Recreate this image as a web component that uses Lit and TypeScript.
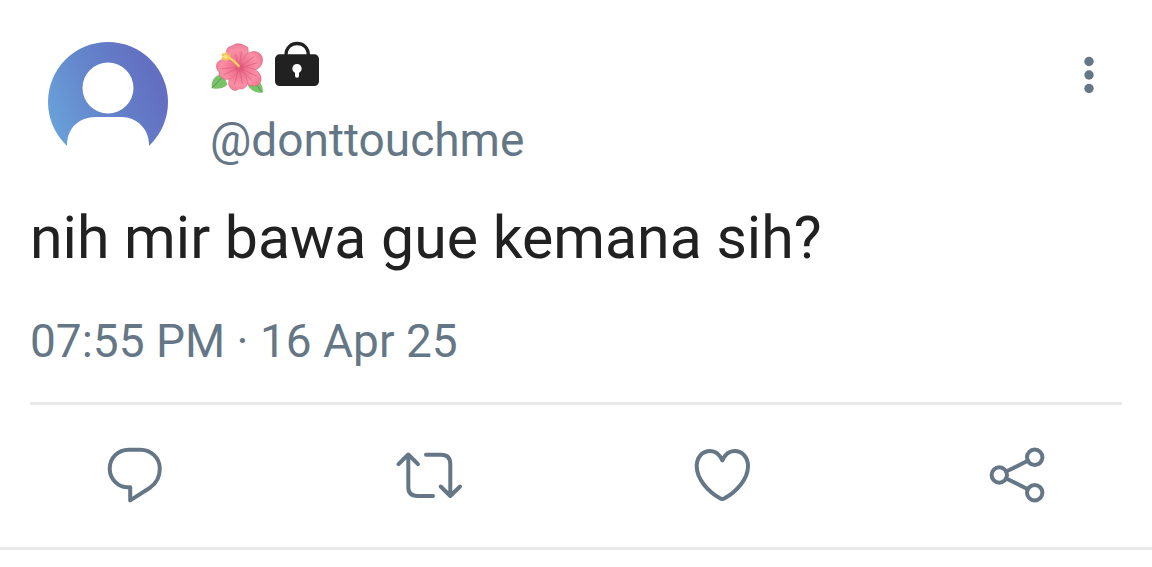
import { LitElement, html, css } from "lit";
import { customElement } from "lit/decorators.js";

@customElement("app-root")
export class AppRoot extends LitElement {
  static styles = css`
    :host {
      display: block;
      font-family: Roboto, "Noto Sans", sans-serif;
      color: #212121;
      background: #fff;
    }
    .post {
      box-sizing: border-box;
      padding: 42px 30px 0;
      border-bottom: 3px solid #e9e9e9;
    }
    .head {
      display: flex;
      align-items: flex-start;
      padding-left: 18px;
      gap: 42px;
    }
    svg {
      display: block;
      flex: none;
      overflow: visible;
    }
    .avatar {
      width: 120px;
      height: 120px;
    }
    .who {
      flex: 1;
    }
    .name {
      display: flex;
      gap: 6px;
      height: 54px;
    }
    .emoji {
      width: 54px;
      height: 54px;
    }
    .handle {
      display: block;
      margin-top: 16px;
      font-size: 46px;
      line-height: 56px;
      color: #657786;
      text-decoration: none;
    }
    button {
      padding: 0;
      border: 0;
      background: none;
      color: #657786;
      cursor: pointer;
    }
    .more {
      margin-top: 6px;
      margin-right: 9px;
    }
    .more svg {
      width: 48px;
      height: 54px;
    }
    .body {
      margin: 34px 0 0;
      font-size: 59px;
      line-height: 72px;
    }
    .time {
      display: block;
      margin-top: 39px;
      font-size: 46px;
      line-height: 56px;
      color: #657786;
    }
    .actions {
      display: flex;
      justify-content: space-between;
      margin-top: 33px;
      padding: 34px 68px 36px;
      border-top: 3px solid #e9e9e9;
    }
    .actions svg {
      width: 72px;
      height: 72px;
      fill: none;
      stroke: currentColor;
      stroke-width: 4;
      stroke-linecap: round;
      stroke-linejoin: round;
    }
  `;

  render() {
    return html`
      <article class="post">
        <header class="head">
          <svg class="avatar" viewBox="0 0 120 120" role="img" aria-label="Profile picture">
            <defs>
              <linearGradient id="sky" x1="0" y1="0.7" x2="0.9" y2="0.3">
                <stop offset="0" stop-color="#69a3da" />
                <stop offset="0.5" stop-color="#6484cb" />
                <stop offset="1" stop-color="#636fc1" />
              </linearGradient>
            </defs>
            <circle cx="60" cy="60" r="60" fill="url(#sky)" />
            <circle cx="60" cy="46" r="25.5" fill="#fff" />
            <path d="M19 121V103C19 86 31 75 48 75H73C90 75 101 88 101 103V121Z" fill="#fff" />
          </svg>
          <div class="who">
            <div class="name">
              <svg class="emoji" viewBox="30 21 162 162" role="img" aria-label="Hibiscus">
                <defs>
                  <radialGradient id="petal" gradientUnits="userSpaceOnUse" cx="118" cy="98" r="76">
                    <stop offset="0" stop-color="#dc4570" />
                    <stop offset="0.25" stop-color="#f0728f" />
                    <stop offset="0.7" stop-color="#f98fa6" />
                    <stop offset="1" stop-color="#ef7893" />
                  </radialGradient>
                </defs>
                <path d="M64 119C49 119 33 131 35 160C51 163 69 161 82 149C79 139 76 128 64 119Z" fill="#79c267" />
                <path d="M37 158C48 148 57 137 66 127" fill="none" stroke="#4a9c52" stroke-width="3" />
                <path d="M143 150C153 169 171 175 188 173C190 151 180 136 163 132Z" fill="#79c267" />
                <path d="M158 141C169 149 178 160 186 171" fill="none" stroke="#4a9c52" stroke-width="3" />
                <g fill="url(#petal)" stroke="#df6380" stroke-width="2" stroke-linejoin="round">
                  <path d="M118 98C91 88 77 65 80 46C84 32 96 36 101 30C114 21 132 31 142 36C150 52 140 78 118 98Z" />
                  <path d="M118 98C127 72 136 56 153 51C168 47 182 54 186 66C191 80 183 97 170 103C151 111 132 104 118 98Z" />
                  <path d="M118 98C149 95 176 102 182 124C187 145 172 156 158 152C139 154 122 130 118 98Z" />
                  <path d="M118 98C135 118 149 138 139 153C132 166 119 158 113 164C101 172 84 156 86 143C87 123 103 112 118 98Z" />
                  <path d="M118 98C111 125 86 139 70 131C59 126 56 117 57 110C46 101 47 83 59 77C75 67 100 80 118 98Z" />
                </g>
                <g fill="none" stroke="#db5a7c" stroke-width="2" stroke-linecap="round">
                  <path d="M118 96L124 50M118 96L106 59" />
                  <path d="M120 97L161 65M122 98L170 84" />
                  <path d="M121 100L169 123M121 101L156 137" />
                  <path d="M119 101L127 145M117 101L103 147" />
                  <path d="M114 99L72 119M113 97L66 101" />
                </g>
                <path d="M80 66C91 69 100 76 116 93" fill="none" stroke="#f4b54f" stroke-width="8" stroke-linecap="round" />
                <path d="M80 65C91 68 100 75 114 90" fill="none" stroke="#ffdc78" stroke-width="4" stroke-linecap="round" />
                <g fill="#fac24f">
                  <circle cx="70" cy="60" r="5" /><circle cx="78" cy="57" r="5" />
                  <circle cx="86" cy="62" r="5" /><circle cx="70" cy="70" r="5" />
                  <circle cx="78" cy="73" r="5" /><circle cx="77" cy="65" r="6" fill="#ffe183" />
                </g>
              </svg>
              <svg class="emoji" viewBox="210 21 162 162" role="img" aria-label="Protected account">
                <path d="M258 64V60C258 14 325 14 325 60V64" fill="none" stroke="#212121" stroke-width="10" />
                <path fill-rule="evenodd" fill="#212121" d="M239 58H343A14 14 0 0 1 357 72V139A14 14 0 0 1 343 153H239A14 14 0 0 1 225 139V72A14 14 0 0 1 239 58ZM291 87C283 87 277 93 277 101C277 106 280 110 285 113V123Q285 128 291 128Q297 128 297 123V113C302 110 305 106 305 101C305 93 299 87 291 87Z" />
              </svg>
            </div>
            <a class="handle" href="#">@donttouchme</a>
          </div>
          <button class="more" aria-label="More options">
            <svg viewBox="0 0 48 54" fill="currentColor">
              <circle cx="24" cy="13.5" r="4.7" />
              <circle cx="24" cy="27" r="4.7" />
              <circle cx="24" cy="40.5" r="4.7" />
            </svg>
          </button>
        </header>
        <p class="body">nih mir bawa gue kemana sih?</p>
        <time class="time" datetime="2025-04-16T19:55">07:55 PM · 16 Apr 25</time>
        <footer class="actions">
          <button aria-label="Reply">
            <svg viewBox="0 0 72 72">
              <path d="M32.2 48.3H30C20 48.3 11.7 40 11.7 29.5C11.7 19 20 10.7 30.5 10.7H42.5C53 10.7 61.8 19 61.8 29.5C61.8 38 58 44.5 52 48.7L32.2 61.4Z" />
            </svg>
          </button>
          <button aria-label="Repost">
            <svg viewBox="0 0 72 72">
              <path d="M5.5 25.2L15.3 15.5L25 25.2M15.3 16V48Q15.3 57 24.5 57H40M33 15.7H48Q57.3 15.7 57.3 25V57M47.7 47.5L57.3 57L67 47.5" />
            </svg>
          </button>
          <button aria-label="Like">
            <svg viewBox="0 0 72 72">
              <path d="M35.3 21.3C32.5 15.5 28.8 12 23.3 12C15 12 9.7 18.5 9.7 27.3C9.7 40 21 52.5 33 59.3Q35.3 60.5 37.6 59.3C49.7 52.5 61 40 61 27.3C61 18.5 55.6 12 47.4 12C41.8 12 38.1 15.5 35.3 21.3Z" />
            </svg>
          </button>
          <button aria-label="Share">
            <svg viewBox="0 0 72 72">
              <circle cx="17.3" cy="36" r="7.7" />
              <circle cx="52.7" cy="18.3" r="7.7" />
              <circle cx="52.7" cy="53.7" r="7.7" />
              <path d="M24.2 32.5L45.8 21.8M24.2 39.5L45.8 50.2" />
            </svg>
          </button>
        </footer>
      </article>
    `;
  }
}
